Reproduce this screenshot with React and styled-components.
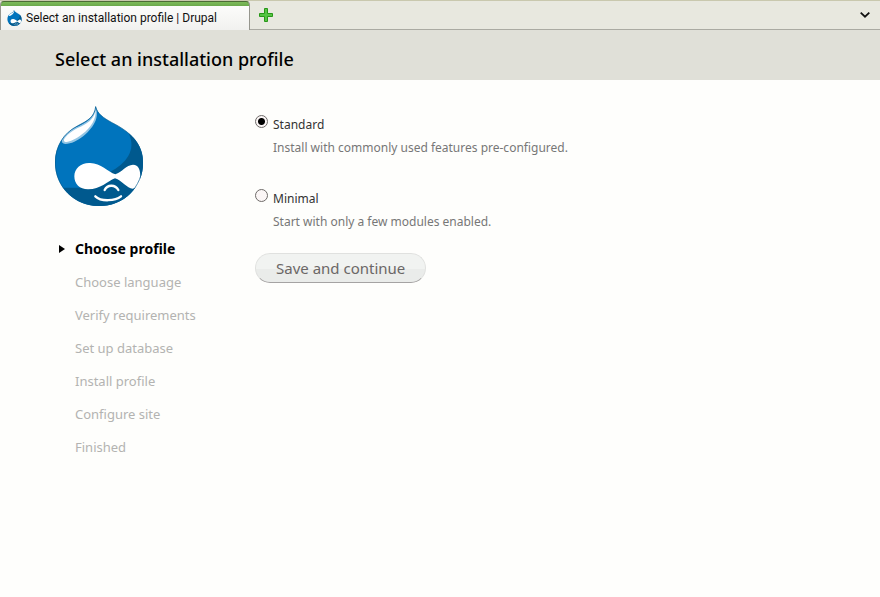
import { useState } from 'react';
import styled, { createGlobalStyle } from 'styled-components';

const GlobalStyle = createGlobalStyle`
	* {
		box-sizing: border-box;
	}

	body {
		margin: 0;
		background: #fefefc;
		font-family: 'Noto Sans', 'Open Sans', sans-serif;
		color: #000;
	}
`;

const steps = [
	'Choose profile',
	'Choose language',
	'Verify requirements',
	'Set up database',
	'Install profile',
	'Configure site',
	'Finished',
];

const profiles = [
	{
		id: 'standard',
		title: 'Standard',
		description: 'Install with commonly used features pre-configured.',
	},
	{
		id: 'minimal',
		title: 'Minimal',
		description: 'Start with only a few modules enabled.',
	},
];

const TabBar = styled.div`
	display: flex;
	height: 30px;
	background: #e8e8df;
	border-top: 1px solid #c9c8ae;
	border-bottom: 1px solid #aaaaa2;
`;

const Tab = styled.button`
	display: flex;
	align-items: center;
	gap: 4px;
	width: 250px;
	height: 29px;
	padding: 4px 7px 0 6px;
	border: 1px solid #96968e;
	border-top: 1px solid #4b6b35;
	border-bottom: 0;
	border-radius: 4px 4px 0 0;
	background: linear-gradient(#7dbb5a 0, #6aa84a 4px, #fcfcfb 4px, #f1f1ef 100%);
	font: 12px/16px Roboto, sans-serif;
	color: #111;
	white-space: nowrap;
`;

const IconButton = styled.button`
	display: flex;
	align-items: center;
	justify-content: center;
	width: ${({ $end }) => ($end ? '30px' : '32px')};
	height: 28px;
	margin-left: ${({ $end }) => ($end ? 'auto' : '0')};
	padding: 0;
	border: 0;
	background: transparent;
`;

const Header = styled.header`
	padding: 8px 55px 0;
	background: #e0e0d8;

	h1 {
		margin: 0;
		font-size: 18px;
		line-height: 42px;
		font-weight: 500;
	}
`;

const Page = styled.div`
	display: flex;
	padding: 26px 55px;
`;

const Sidebar = styled.aside`
	flex: 0 0 200px;

	svg {
		display: block;
	}
`;

const StepList = styled.ol`
	margin: 26px 0 0;
	padding: 0;
	list-style: none;
`;

const Step = styled.li`
	display: flex;
	align-items: center;
	height: 33px;
	padding-left: ${({ $active }) => ($active ? '4px' : '20px')};
	gap: 10px;
	font-size: ${({ $active }) => ($active ? '14px' : '13px')};
	font-weight: ${({ $active }) => ($active ? 700 : 400)};
	color: ${({ $active }) => ($active ? '#000' : '#b3b3b1')};
`;

const Form = styled.form`
	flex: 1;
	padding-top: 8px;
`;

const Option = styled.div`
	display: grid;
	grid-template-columns: 13px 1fr;
	column-gap: 5px;
	align-items: start;
	align-content: start;
	height: 74px;

	label {
		font-size: 12px;
		line-height: 22px;
		color: #333;
	}

	p {
		grid-column: 2;
		margin: 0;
		font-size: 12px;
		line-height: 24px;
		color: #777;
	}
`;

const Radio = styled.input`
	appearance: none;
	width: 13px;
	height: 13px;
	margin: 1px 0 0;
	border: 1px solid #6f6b69;
	border-radius: 50%;
	background: #fbf6f6;

	&:checked {
		background: radial-gradient(circle, #000 3px, #fbf6f6 4px);
	}
`;

const SubmitButton = styled.button`
	display: block;
	height: 30px;
	margin-top: -9px;
	padding: 0 20px;
	border: 1px solid #e0e1df;
	border-bottom-color: #a5a3a3;
	border-radius: 15px;
	background: linear-gradient(#f1f3f1 0 55%, #eaecea 55% 100%);
	font: 15px/28px 'Noto Sans', 'Open Sans', sans-serif;
	color: #6b6766;
`;

const Druplicon = ({ width, height }) => (
	<svg width={width} height={height} viewBox="30 24 264 300" aria-hidden="true">
		<path
			fill="#0074bd"
			d="M152 24C157 47 174 59 201 74C259 103 294 139 294 194C294 268 236 324 162 324C88 324 30 267 30 193C30 145 56 105 97 84C128 68 148 58 152 24Z"
		/>
		<path
			fill="#00598e"
			d="M251 106C279 129 294 157 294 194C294 268 236 324 162 324C119 324 78 303 55 269H100C142 269 166 244 195 222C242 198 276 157 251 106Z"
		/>
		<path
			fill="#93c5e4"
			d="M152 28C158 42 156 60 151 70C139 99 96 138 61 138C44 136 50 119 62 110C91 79 143 82 152 28Z"
		/>
		<path
			fill="#fff"
			d="M151 38C155 60 139 88 111 109C87 128 62 137 57 129C54 121 76 101 98 90C127 77 146 65 151 38Z"
		/>
		<path
			fill="#fff"
			d="M132 195C166 193 188 221 211 229C231 222 244 201 264 200C281 200 286 216 286 235C286 255 277 272 263 272C246 272 231 247 210 241C187 250 167 274 129 274C104 274 88 258 88 235C88 211 107 196 132 195Z"
		/>
		<g fill="none" stroke="#fff" strokeWidth="7" strokeLinecap="round">
			<path d="M179 276C187 260 210 258 220 276" />
			<path d="M151 295C168 312 211 309 228 295" />
		</g>
		<path
			fill="none"
			stroke="#00598e"
			strokeWidth="2"
			d="M152 26C157 47 174 59 201 74C259 103 293 139 293 194C293 268 236 323 162 323C88 323 31 267 31 193C31 145 56 105 97 84C128 68 148 58 152 26Z"
		/>
	</svg>
);

const PlusIcon = () => (
	<svg width="14" height="14" viewBox="0 0 14 14" aria-hidden="true">
		<path
			d="M5.5.5h3v5h5v3h-5v5h-3v-5h-5v-3h5z"
			fill="#55c443"
			stroke="#289718"
			strokeLinejoin="round"
		/>
	</svg>
);

const ChevronIcon = () => (
	<svg width="10" height="6" viewBox="0 0 10 6" aria-hidden="true">
		<path d="M.7.7 5 4.7 9.3.7" fill="none" stroke="#111" strokeWidth="1.8" />
	</svg>
);

const ArrowIcon = () => (
	<svg width="6" height="8" viewBox="0 0 6 8" aria-hidden="true">
		<path d="M0 0 6 4 0 8Z" />
	</svg>
);

const BrowserTabs = () => (
	<TabBar>
		<Tab type="button">
			<Druplicon width={15} height={16} />
			Select an installation profile | Drupal
		</Tab>
		<IconButton type="button" aria-label="New tab">
			<PlusIcon />
		</IconButton>
		<IconButton type="button" aria-label="List all tabs" $end>
			<ChevronIcon />
		</IconButton>
	</TabBar>
);

const App = () => {
	const [profile, setProfile] = useState('standard');

	return (
		<>
			<GlobalStyle />
			<BrowserTabs />
			<Header>
				<h1>Select an installation profile</h1>
			</Header>
			<Page>
				<Sidebar>
					<Druplicon width={88} height={100} />
					<StepList>
						{steps.map((step, index) => (
							<Step key={step} $active={index === 0}>
								{index === 0 && <ArrowIcon />}
								{step}
							</Step>
						))}
					</StepList>
				</Sidebar>
				<Form onSubmit={(event) => event.preventDefault()}>
					{profiles.map(({ id, title, description }) => (
						<Option key={id}>
							<Radio
								type="radio"
								id={id}
								name="profile"
								value={id}
								checked={profile === id}
								onChange={() => setProfile(id)}
							/>
							<label htmlFor={id}>{title}</label>
							<p>{description}</p>
						</Option>
					))}
					<SubmitButton type="submit">Save and continue</SubmitButton>
				</Form>
			</Page>
		</>
	);
};

export default App;
